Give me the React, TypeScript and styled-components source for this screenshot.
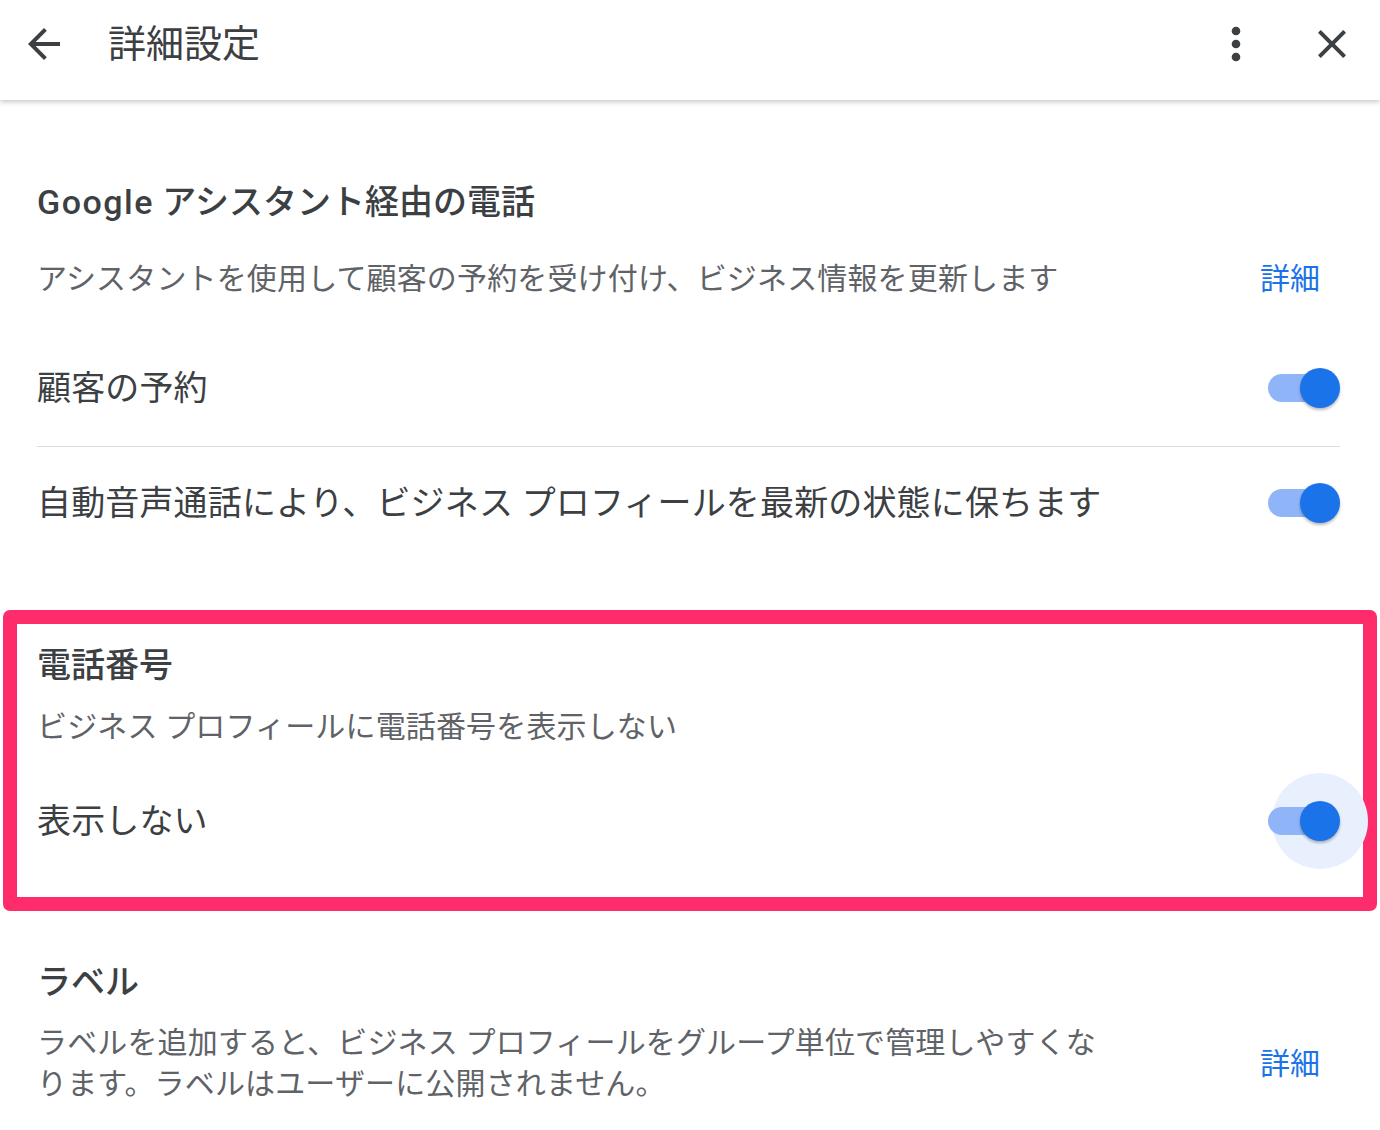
import React from "react";
import styled, { createGlobalStyle } from "styled-components";

const GlobalStyle = createGlobalStyle`
  html, body {
    margin: 0;
    padding: 0;
    background: #fff;
  }
  body {
    font-family: Roboto, "Noto Sans CJK JP", "Noto Sans", sans-serif;
    color: #3c4043;
  }
`;

const Page = styled.div`
  width: 1380px;
  min-height: 1130px;
  background: #fff;
  overflow: hidden;
`;

const Header = styled.header`
  height: 100px;
  display: flex;
  align-items: center;
  padding: 0 24px 13px 20px;
  box-sizing: border-box;
  background: #fff;
  box-shadow: 0 2px 5px rgba(0, 0, 0, 0.22);
  position: relative;
  z-index: 1;
`;

const IconButton = styled.button<{ $size: number }>`
  width: ${(p) => p.$size}px;
  height: ${(p) => p.$size}px;
  padding: 0;
  border: 0;
  background: none;
  color: #3c4043;
  display: flex;
  align-items: center;
  justify-content: center;
  svg {
    width: ${(p) => p.$size}px;
    height: ${(p) => p.$size}px;
    fill: currentColor;
  }
`;

const HeaderTitle = styled.h1`
  margin: 0 0 0 40px;
  flex: 1;
  font-size: 38px;
  font-weight: 400;
  color: #3c4043;
  line-height: 1;
`;

const HeaderActions = styled.div`
  display: flex;
  align-items: center;
  gap: 46px;
`;

const Content = styled.main`
  padding: 82px 40px 0 37px;
`;

const Section = styled.section`
  display: flex;
  flex-direction: column;
`;

const Highlight = styled.section`
  margin: 51px -37px 0 -34px;
  border: 14px solid #ff2c6c;
  border-radius: 7px;
  padding: 21px 23px 26px 20px;
  display: flex;
  flex-direction: column;
`;

const SectionTitle = styled.h2<{ $gap?: number }>`
  margin: ${(p) => p.$gap ?? 0}px 0 0;
  font-size: 34px;
  line-height: 40px;
  font-weight: 500;
  color: #3c4043;
`;

const Brand = styled.span`
  letter-spacing: 1.5px;
`;

const DescRow = styled.div<{ $gap: number }>`
  margin-top: ${(p) => p.$gap}px;
  display: flex;
  align-items: center;
  justify-content: space-between;
`;

const Desc = styled.p`
  margin: 0;
  max-width: 1072px;
  font-size: 30px;
  line-height: 41px;
  letter-spacing: 0.15px;
  color: #5f6368;
`;

const Link = styled.a`
  font-size: 30px;
  line-height: 41px;
  color: #1a73e8;
  text-decoration: none;
  flex-shrink: 0;
  margin-right: 20px;
`;

const ToggleRow = styled.div<{ $height: number; $gap?: number; $divider?: boolean }>`
  height: ${(p) => p.$height}px;
  margin-top: ${(p) => p.$gap ?? 0}px;
  display: flex;
  align-items: center;
  justify-content: space-between;
  border-bottom: ${(p) => (p.$divider ? "1px solid #dadce0" : "none")};
`;

const RowLabel = styled.span`
  font-size: 34px;
  line-height: 40px;
  letter-spacing: 0.15px;
  color: #3c4043;
`;

const Switch = styled.div`
  position: relative;
  width: 72px;
  height: 40px;
  flex-shrink: 0;
`;

const Track = styled.span`
  position: absolute;
  left: 0;
  top: 6px;
  width: 66px;
  height: 28px;
  border-radius: 14px;
  background: #8fb5f8;
`;

const Halo = styled.span`
  position: absolute;
  left: 4px;
  top: -28px;
  width: 96px;
  height: 96px;
  border-radius: 50%;
  background: #e8f0fe;
`;

const Knob = styled.span`
  position: absolute;
  right: 0;
  top: 0;
  width: 40px;
  height: 40px;
  border-radius: 50%;
  background: #1a73e8;
  box-shadow: 0 2px 3px rgba(0, 0, 0, 0.28);
`;

function Toggle({ focused }: { focused?: boolean }) {
  return (
    <Switch>
      {focused && <Halo />}
      <Track />
      <Knob />
    </Switch>
  );
}

export default function App() {
  return (
    <Page>
      <GlobalStyle />
      <Header>
        <IconButton $size={48} aria-label="戻る">
          <svg viewBox="0 0 24 24">
            <path d="M20 11H7.830l5.59-5.59L12 4l-8 8 8 8 1.41-1.41L7.83 13H20v-2z" />
          </svg>
        </IconButton>
        <HeaderTitle>詳細設定</HeaderTitle>
        <HeaderActions>
          <IconButton $size={52} aria-label="その他">
            <svg viewBox="0 0 24 24">
              <path d="M12 8c1.1 0 2-.9 2-2s-.9-2-2-2-2 .9-2 2 .9 2 2 2zm0 2c-1.1 0-2 .9-2 2s.9 2 2 2 2-.9 2-2-.9-2-2-2zm0 6c-1.1 0-2 .9-2 2s.9 2 2 2 2-.9 2-2-.9-2-2-2z" />
            </svg>
          </IconButton>
          <IconButton $size={48} aria-label="閉じる">
            <svg viewBox="0 0 24 24">
              <path d="M19 6.41L17.59 5 12 10.59 6.41 5 5 6.41 10.59 12 5 17.59 6.41 19 12 13.41 17.59 19 19 17.59 13.41 12z" />
            </svg>
          </IconButton>
        </HeaderActions>
      </Header>

      <Content>
        <Section>
          <SectionTitle>
            <Brand>Google</Brand> アシスタント経由の電話
          </SectionTitle>
          <DescRow $gap={36}>
            <Desc>アシスタントを使用して顧客の予約を受け付け、ビジネス情報を更新します</Desc>
            <Link href="#">詳細</Link>
          </DescRow>
          <ToggleRow $height={116} $gap={31} $divider>
            <RowLabel>顧客の予約</RowLabel>
            <Toggle />
          </ToggleRow>
          <ToggleRow $height={112}>
            <RowLabel>自動音声通話により、ビジネス プロフィールを最新の状態に保ちます</RowLabel>
            <Toggle />
          </ToggleRow>
        </Section>

        <Highlight>
          <SectionTitle>電話番号</SectionTitle>
          <DescRow $gap={21}>
            <Desc>ビジネス プロフィールに電話番号を表示しない</Desc>
          </DescRow>
          <ToggleRow $height={100} $gap={24}>
            <RowLabel>表示しない</RowLabel>
            <Toggle focused />
          </ToggleRow>
        </Highlight>

        <Section>
          <SectionTitle $gap={51}>ラベル</SectionTitle>
          <DescRow $gap={20}>
            <Desc>
              ラベルを追加すると、ビジネス プロフィールをグループ単位で管理しやすくなります。ラベルはユーザーに公開されません。
            </Desc>
            <Link href="#">詳細</Link>
          </DescRow>
        </Section>
      </Content>
    </Page>
  );
}
